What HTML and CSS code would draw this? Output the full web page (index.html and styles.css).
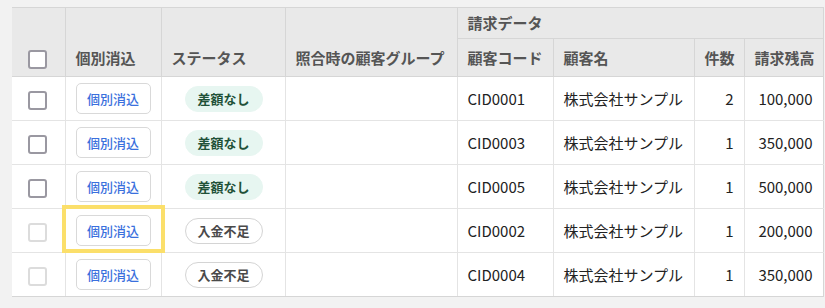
FILE: index.html
```html
<!DOCTYPE html>
<html lang="ja">
<head>
<meta charset="utf-8">
<link rel="stylesheet" href="styles.css">
</head>
<body>
<div class="wrap">
<table class="grid">
  <colgroup>
    <col class="c-check"><col class="c-btn"><col class="c-status"><col class="c-group">
    <col class="c-code"><col class="c-name"><col class="c-count"><col class="c-amount">
  </colgroup>
  <thead>
    <tr class="hr1">
      <th rowspan="2" class="th-check"><span class="cb"></span></th>
      <th rowspan="2">個別消込</th>
      <th rowspan="2">ステータス</th>
      <th rowspan="2">照合時の顧客グループ</th>
      <th colspan="4" class="th-group">請求データ</th>
    </tr>
    <tr class="hr2">
      <th>顧客コード</th>
      <th>顧客名</th>
      <th class="num">件数</th>
      <th class="num">請求残高</th>
    </tr>
  </thead>
  <tbody>
    <tr>
      <td class="td-check"><span class="cb"></span></td>
      <td><button class="btn">個別消込</button></td>
      <td class="td-status"><span class="badge ok">差額なし</span></td>
      <td></td>
      <td>CID0001</td><td>株式会社サンプル</td><td class="num">2</td><td class="num">100,000</td>
    </tr>
    <tr>
      <td class="td-check"><span class="cb"></span></td>
      <td><button class="btn">個別消込</button></td>
      <td class="td-status"><span class="badge ok">差額なし</span></td>
      <td></td>
      <td>CID0003</td><td>株式会社サンプル</td><td class="num">1</td><td class="num">350,000</td>
    </tr>
    <tr>
      <td class="td-check"><span class="cb"></span></td>
      <td><button class="btn">個別消込</button></td>
      <td class="td-status"><span class="badge ok">差額なし</span></td>
      <td></td>
      <td>CID0005</td><td>株式会社サンプル</td><td class="num">1</td><td class="num">500,000</td>
    </tr>
    <tr>
      <td class="td-check"><span class="cb cb-off"></span></td>
      <td class="td-hl"><button class="btn">個別消込</button><span class="highlight"></span></td>
      <td class="td-status"><span class="badge short">入金不足</span></td>
      <td></td>
      <td>CID0002</td><td>株式会社サンプル</td><td class="num">1</td><td class="num">200,000</td>
    </tr>
    <tr>
      <td class="td-check"><span class="cb cb-off"></span></td>
      <td><button class="btn">個別消込</button></td>
      <td class="td-status"><span class="badge short">入金不足</span></td>
      <td></td>
      <td>CID0004</td><td>株式会社サンプル</td><td class="num">1</td><td class="num">350,000</td>
    </tr>
  </tbody>
</table>
</div>
</body>
</html>
```
FILE: styles.css
```css
html, body {
  margin: 0;
  padding: 0;
  background: #f2f2f2;
}
body {
  font-family: "Noto Sans CJK JP", "Noto Sans", sans-serif;
  color: #222;
}
.wrap {
  padding: 7px 0 0 12px;
}
.grid {
  border-collapse: collapse;
  table-layout: fixed;
  width: 811px;
  background: #fff;
}
.c-check { width: 53px; }
.c-btn { width: 96px; }
.c-status { width: 124px; }
.c-group { width: 172px; }
.c-code { width: 96px; }
.c-name { width: 141px; }
.c-count { width: 50px; }
.c-amount { width: 79px; }

.grid th {
  background: #e9e9e9;
  color: #555;
  font-size: 15px;
  font-weight: 700;
  text-align: left;
  vertical-align: bottom;
  padding: 0 10px 7px;
  border: 1px solid #d6d6d6;
  line-height: 22px;
  white-space: nowrap;
}
.grid thead tr:first-child th:first-child { border-left: none; }
.hr1 { height: 31px; }
.hr2 { height: 38px; }
.grid th.th-group {
  vertical-align: middle;
  padding-bottom: 0;
}
.grid th.th-check {
  padding: 0 0 7px 16px;
}
.grid th.num { text-align: right; }

.grid td {
  height: 43px;
  padding: 0 10px;
  border: 1px solid #e4e4e4;
  font-size: 15px;
  line-height: 22px;
  vertical-align: middle;
  white-space: nowrap;
  color: #222;
}
.grid tbody tr td:first-child { border-left: none; }
.grid tbody tr:last-child td { border-bottom: 1px solid #d6d6d6; }
.grid td:last-child, .grid th:last-child { border-right: 1px solid #d6d6d6; }
.grid td.num { text-align: right; }
.grid td.td-check { padding: 0 0 0 16px; }
.grid td.td-status { padding-left: 23px; }

.cb {
  display: inline-block;
  box-sizing: border-box;
  width: 19px;
  height: 19px;
  border: 2px solid #9a98a1;
  border-radius: 3px;
  background: #fff;
  vertical-align: middle;
}
.cb.cb-off { border-color: #dcdcdc; }

.btn {
  box-sizing: border-box;
  width: 75px;
  height: 31px;
  padding: 0;
  border: 1px solid #d9d9d9;
  border-radius: 5px;
  background: #fff;
  color: #3a70dd;
  font-family: "Noto Sans CJK JP", sans-serif;
  font-size: 13px;
  font-weight: 500;
  display: block;
}

.badge {
  display: inline-block;
  box-sizing: border-box;
  height: 26px;
  line-height: 24px;
  padding: 0 12px;
  border-radius: 13px;
  font-size: 13px;
  font-weight: 700;
  vertical-align: middle;
}
.badge.ok {
  background: #e7f6f1;
  border: 1px solid #e7f6f1;
  color: #1f5138;
}
.badge.short {
  background: #fff;
  border: 1px solid #d4d4d4;
  color: #4a4a4a;
}

.td-hl { position: relative; }
.highlight {
  position: absolute;
  left: -4px;
  top: -4px;
  width: 103px;
  height: 48px;
  box-sizing: border-box;
  border: 4px solid #fbdf6a;
  pointer-events: none;
}
```
